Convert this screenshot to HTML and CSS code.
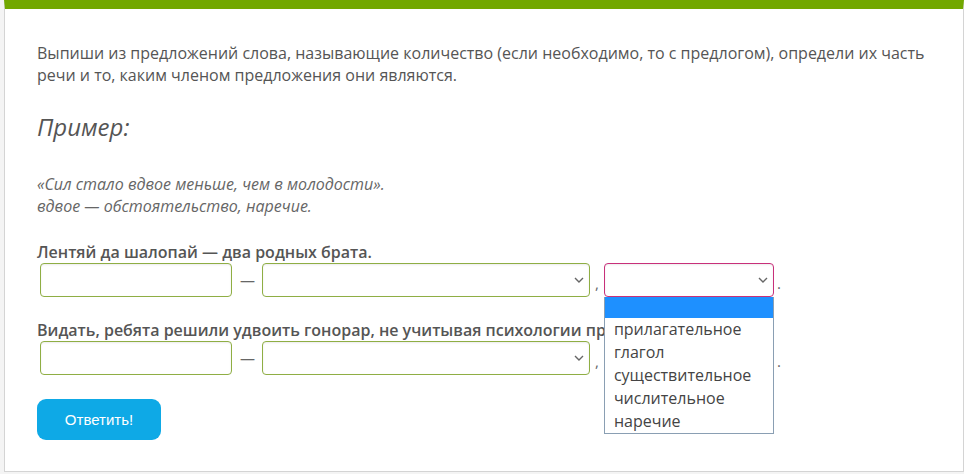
FILE: index.html
```html
<!DOCTYPE html>
<html lang="ru">
<head>
    <meta charset="UTF-8" />
    <title>Задание</title>
    <link rel="stylesheet" href="styles.css">
</head>
<body>

<div class="task">
    <p class="task-text">Выпиши из предложений слова, называющие количество (если необходимо, то с предлогом), определи их часть речи и то, каким членом предложения они являются.</p>

    <h2 class="example-title">Пример:</h2>
    <p class="example">«Сил стало вдвое меньше, чем в молодости».<br>вдвое — обстоятельство, наречие.</p>

    <div class="sentence">
        <p class="phrase">Лентяй да шалопай — два родных брата.</p>
        <div class="answer-row">
            <input type="text" class="word">
            <span class="sep dash">—</span>
            <select class="pick wide"><option></option></select>
            <span class="sep">,</span>
            <span class="pick-wrap">
                <select class="pick narrow open"><option></option></select>
                <ul class="options">
                    <li class="selected"></li>
                    <li>прилагательное</li>
                    <li>глагол</li>
                    <li>существительное</li>
                    <li>числительное</li>
                    <li>наречие</li>
                </ul>
            </span>
            <span class="sep end">.</span>
        </div>
    </div>

    <div class="sentence">
        <p class="phrase">Видать, ребята решили удвоить гонорар, не учитывая психологии продюсеров.</p>
        <div class="answer-row">
            <input type="text" class="word">
            <span class="sep dash">—</span>
            <select class="pick wide"><option></option></select>
            <span class="sep">,</span>
            <select class="pick narrow"><option></option></select>
            <span class="sep end">.</span>
        </div>
    </div>

    <button class="submit">Ответить!</button>
</div>

</body>
</html>
```

FILE: styles.css
```css
body {
    margin: 0;
    background-color: #f4f4f4;
    font-family: 'Open Sans', 'Noto Sans', sans-serif;
    color: #555;
}
.task {
    margin-left: 4px;
    width: 958px;
    height: 429px;
    box-sizing: content-box;
    background-color: #fff;
    border: 1px solid #d4d4d4;
    border-top: 9px solid #72a800;
    padding: 33px 0 0 0;
}
.task-text {
    margin: 0 33px 0 32px;
    font-size: 16px;
    line-height: 22px;
}
.example-title {
    margin: 25px 0 0 32px;
    font-size: 24px;
    line-height: 32px;
    font-weight: normal;
    font-style: italic;
}
.example {
    margin: 30px 0 0 32px;
    font-size: 16px;
    line-height: 22px;
    font-style: italic;
    color: #666;
}
.sentence {
    margin: 24px 0 0 32px;
}
.sentence + .sentence {
    margin-top: 22px;
}
.phrase {
    margin: 0;
    font-size: 16px;
    line-height: 22px;
    font-weight: 600;
}
.answer-row {
    display: flex;
    align-items: center;
    padding-left: 3px;
    height: 34px;
}
.word, .pick {
    height: 34px;
    box-sizing: border-box;
    border: 1px solid #8fae44;
    border-radius: 4px;
    box-shadow: inset 0 1px 2px rgba(0, 0, 0, 0.08);
    background-color: #fff;
    font-family: inherit;
    font-size: 16px;
}
.word {
    width: 192px;
}
.pick {
    appearance: none;
    background-image: url("data:image/svg+xml,%3Csvg xmlns='http://www.w3.org/2000/svg' width='10' height='6'%3E%3Cpath d='M1 1l4 4 4-4' fill='none' stroke='%23666' stroke-width='1.4'/%3E%3C/svg%3E");
    background-repeat: no-repeat;
    background-position: right 5px center;
}
.wide {
    width: 328px;
}
.narrow {
    width: 170px;
}
.pick.open {
    border-color: #c8307a;
}
.sep {
    font-size: 15px;
    color: #666;
    margin: 0 5px;
    padding-top: 6px;
}
.sep.end {
    margin-left: 3px;
}
.dash {
    margin: 0 7px 0 8px;
    padding-top: 0;
}
.pick-wrap {
    position: relative;
    display: flex;
}
.options {
    position: absolute;
    top: 34px;
    left: 0;
    width: 170px;
    box-sizing: border-box;
    margin: 0;
    padding: 0;
    list-style: none;
    background-color: #fff;
    border: 1px solid #8a9fb3;
    border-top: none;
    z-index: 2;
}
.options li {
    height: 23px;
    line-height: 23px;
    padding-left: 9px;
    font-size: 16px;
    color: #444;
}
.options li.selected {
    height: 21px;
    background-color: #1e90ff;
}
.submit {
    margin: 24px 0 0 32px;
    width: 124px;
    height: 41px;
    border: none;
    border-radius: 9px;
    background-color: #0ea9e6;
    color: #fff;
    font-family: 'Liberation Sans', Arial, sans-serif;
    font-size: 15px;
    cursor: pointer;
}
```
